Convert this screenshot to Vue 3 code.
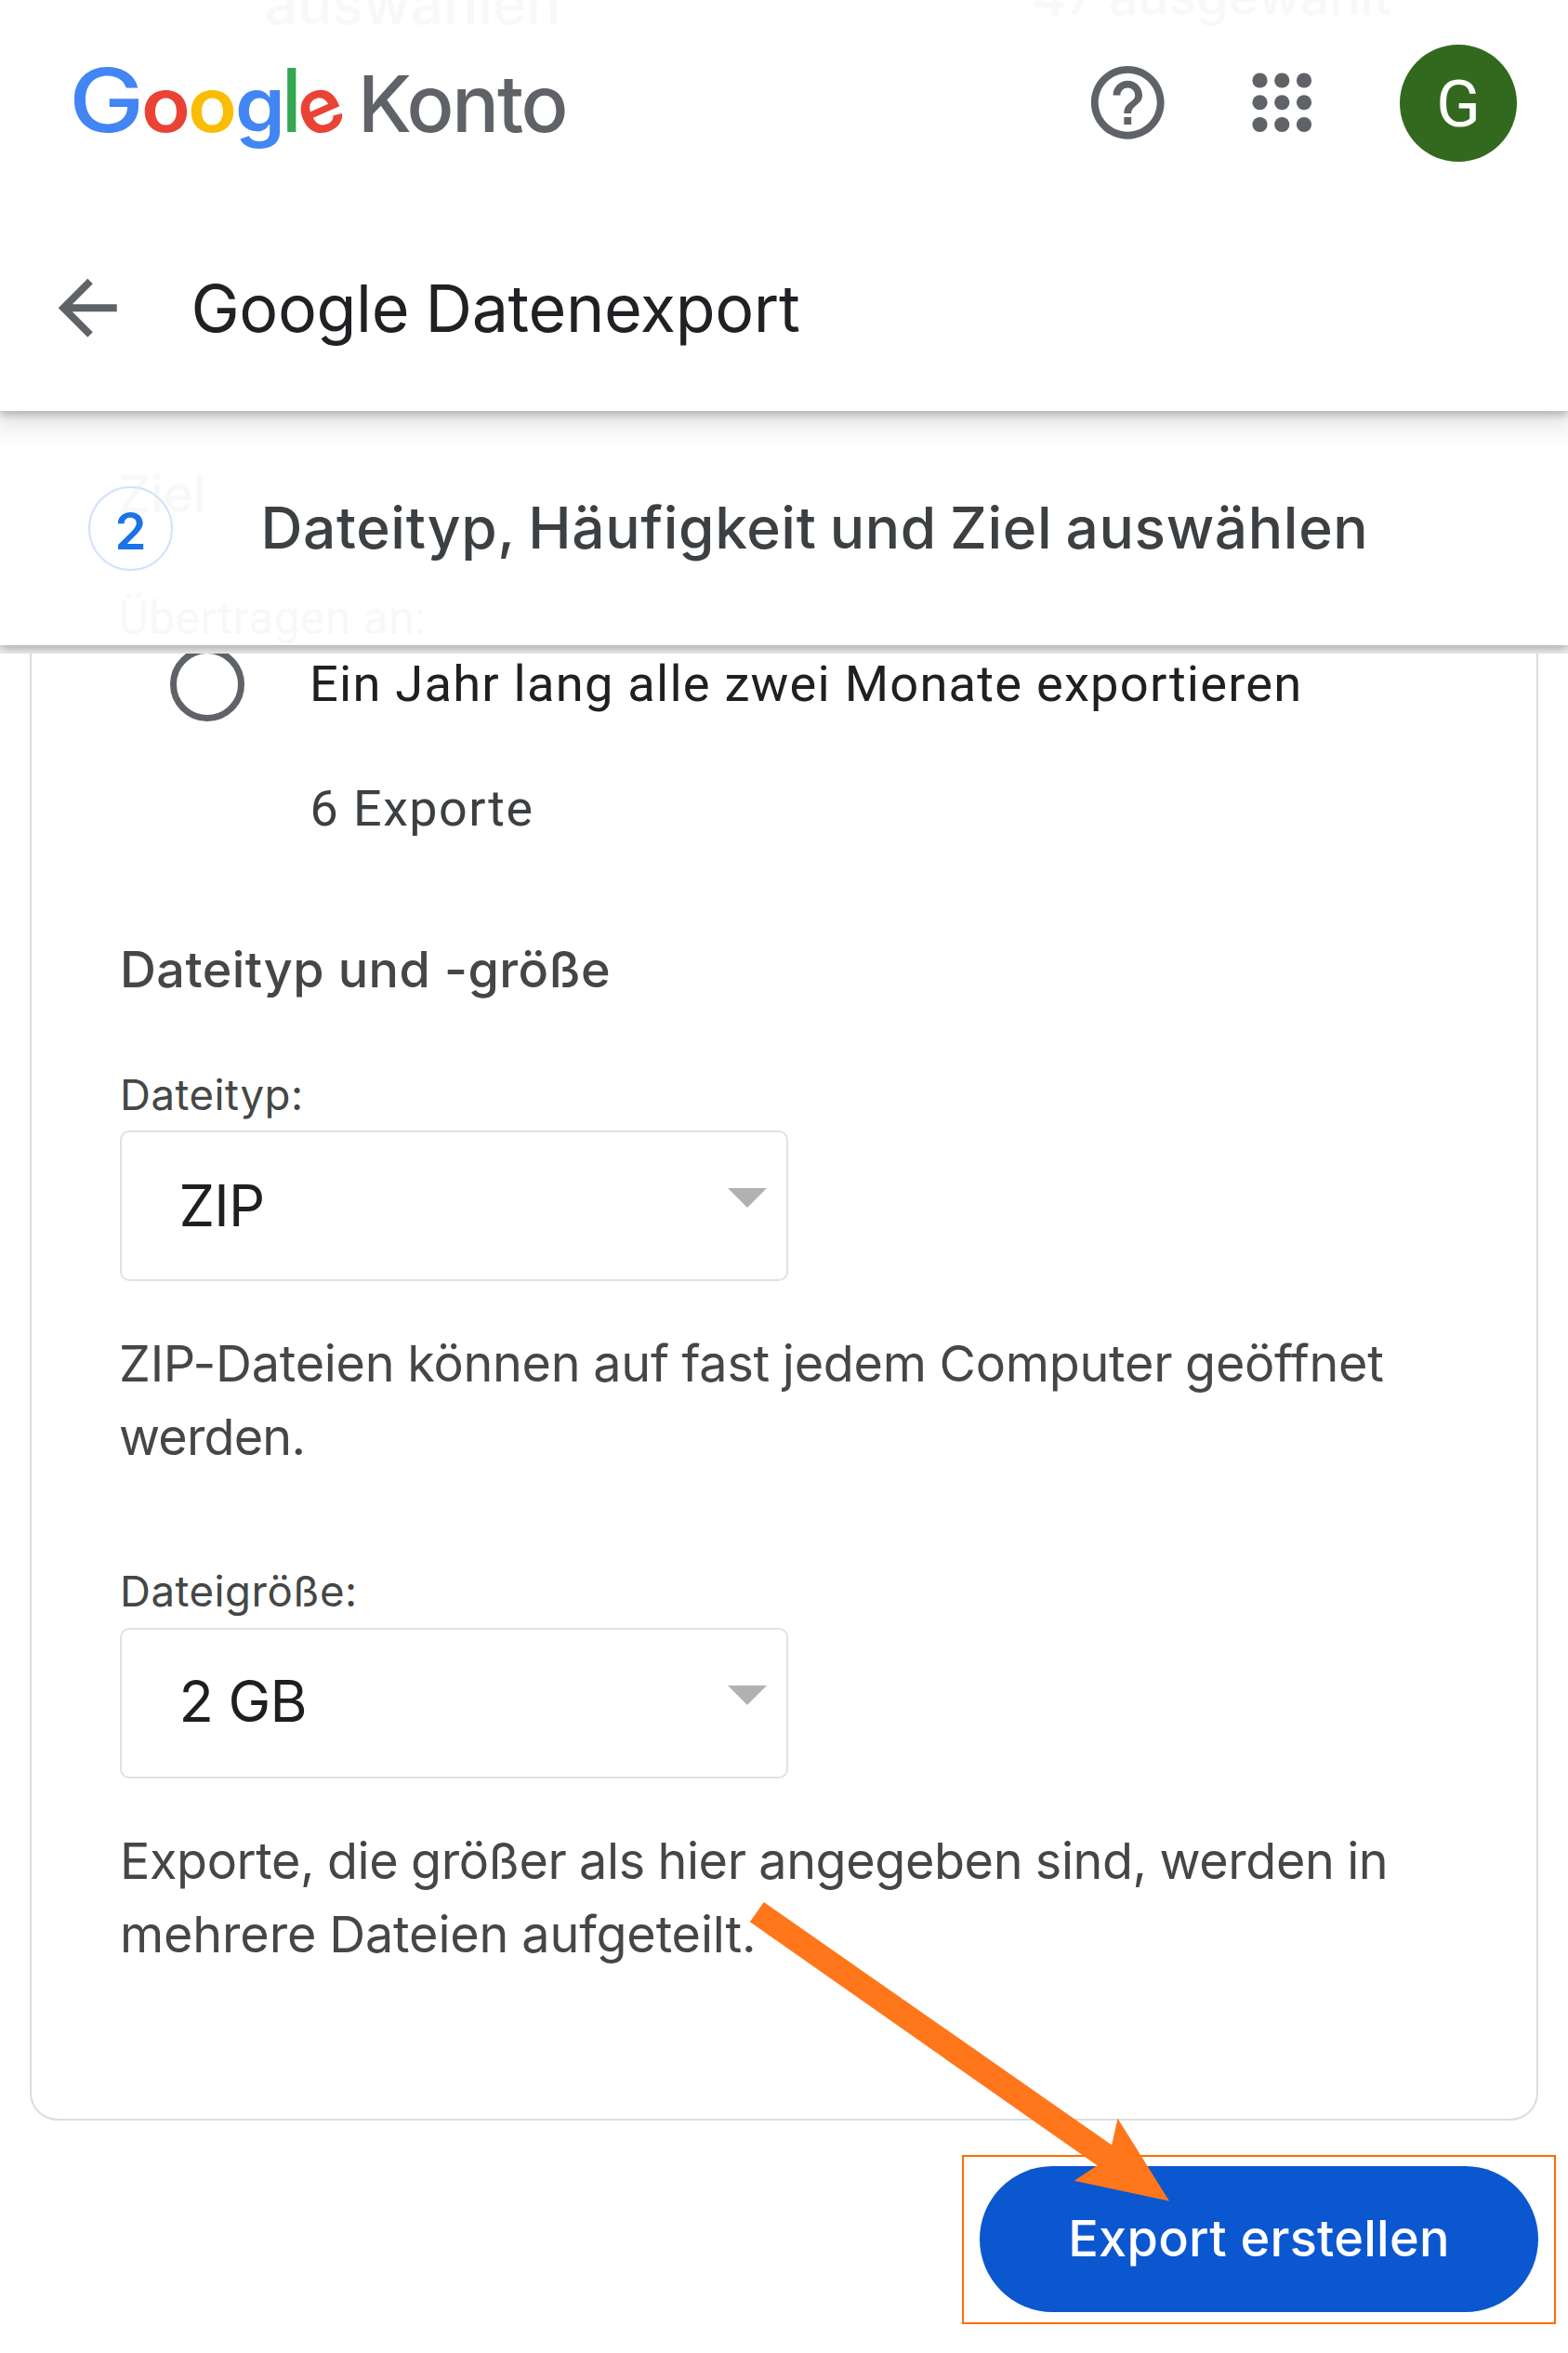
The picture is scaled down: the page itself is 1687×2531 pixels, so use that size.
<script setup>
const logo = [
  { ch: 'G', cls: 'cap blue' },
  { ch: 'o', cls: 'round red' },
  { ch: 'o', cls: 'round yellow' },
  { ch: 'g', cls: 'gee blue' },
  { ch: 'l', cls: 'ell green' },
  { ch: 'e', cls: 'eee red' },
]
const dots = [23.5, 47.25, 71]
</script>

<template>
  <div class="page">
    <header class="header">
      <span class="ghost ghost-left">auswählen</span>
      <span class="ghost ghost-right">47 ausgewählt</span>
      <div class="topbar">
        <div class="brand">
          <span v-for="(l, i) in logo" :key="i" class="letter" :class="l.cls">{{ l.ch }}</span>
          <span class="product">Konto</span>
        </div>
        <svg class="icon help" viewBox="0 0 24 24" aria-hidden="true">
          <path d="M11 18h2v-2h-2v2zm1-16C6.48 2 2 6.48 2 12s4.48 10 10 10 10-4.48 10-10S17.52 2 12 2zm0 18c-4.41 0-8-3.59-8-8s3.59-8 8-8 8 3.59 8 8-3.59 8-8 8zm0-14c-2.21 0-4 1.79-4 4h2c0-1.1.9-2 2-2s2 .9 2 2c0 2-3 1.75-3 5h2c0-2.25 3-2.5 3-5 0-2.21-1.79-4-4-4z" />
        </svg>
        <svg class="icon apps" viewBox="0 0 94.5 94.5" aria-hidden="true">
          <template v-for="y in dots" :key="y">
            <circle v-for="x in dots" :key="x" :cx="x" :cy="y" r="8.1" />
          </template>
        </svg>
        <div class="avatar">G</div>
      </div>
      <div class="titlebar">
        <svg class="icon" viewBox="0 0 24 24" aria-hidden="true">
          <path d="M20 11H7.83l5.59-5.59L12 4l-8 8 8 8 1.41-1.41L7.83 13H20v-2z" />
        </svg>
        <h1>Google Datenexport</h1>
      </div>
    </header>

    <div class="step-wrap">
      <div class="step">
        <span class="ghost ghost-ziel">Ziel</span>
        <span class="ghost ghost-an">Übertragen an:</span>
        <span class="num"><span>2</span></span>
        <h2>Dateityp, Häufigkeit und Ziel auswählen</h2>
      </div>
    </div>

    <main class="card">
      <div class="option">
        <span class="radio"></span>
        <span class="option-label">Ein Jahr lang alle zwei Monate exportieren</span>
      </div>
      <p class="option-note">6 Exporte</p>

      <h3>Dateityp und -größe</h3>

      <div class="label">Dateityp:</div>
      <div class="select">
        <span>ZIP</span>
        <svg class="caret" viewBox="0 0 42 21"><path d="M0 0h42L21 21z" /></svg>
      </div>
      <p class="help-text first">ZIP-Dateien können auf fast jedem Computer geöffnet<br /><span class="tight">werden.</span></p>

      <div class="label second">Dateigröße:</div>
      <div class="select size">
        <span>2 GB</span>
        <svg class="caret" viewBox="0 0 42 21"><path d="M0 0h42L21 21z" /></svg>
      </div>
      <p class="help-text last">Exporte, die größer als hier angegeben sind, werden in<br /><span class="loose">mehrere Dateien aufgeteilt.</span></p>
    </main>

    <div class="highlight">
      <button class="create" type="button">Export erstellen</button>
    </div>

    <svg class="pointer" viewBox="0 0 452 322" aria-hidden="true">
      <path d="M15.8 0 390.1 261.3 396.5 232.7 452 321.5 349.7 299.7 374.5 283.3 .8 21.3z" />
    </svg>
  </div>
</template>

<style>
body { margin: 0; background: #fff; }
</style>

<style scoped>
.page {
  position: relative;
  display: flex;
  flex-direction: column;
  width: 1687px;
  height: 2531px;
  overflow: hidden;
  background: #fff;
  font-family: Inter, "Liberation Sans", sans-serif;
  color: #444746;
}
h1, h2, h3, p { margin: 0; }
.ghost { position: absolute; color: #f8f8f8; white-space: nowrap; line-height: 80px; }
.ghost-left { left: 285px; top: -36.5px; font-size: 62px; font-weight: 500; letter-spacing: -.1px; }
.ghost-right { left: 1110px; top: -44.5px; font-size: 56px; font-weight: 450; letter-spacing: -.4px; }
.ghost-ziel { left: 127px; top: 48.5px; font-size: 54.5px; font-weight: 500; }
.ghost-an { left: 127.5px; top: 183px; font-family: Roboto, sans-serif; font-size: 49.7px; letter-spacing: .5px; }

.header {
  position: relative;
  z-index: 2;
  flex: none;
  height: 442px;
  background: #fff;
  box-shadow: 0 4px 8px rgba(60, 64, 67, .3), 0 8px 24px 8px rgba(60, 64, 67, .15);
}
.topbar {
  position: relative;
  display: flex;
  align-items: center;
  height: 221px;
  padding: 0 55px 0 73.5px;
}
.brand { flex: 1; white-space: nowrap; font-size: 0; }
.letter {
  display: inline-block;
  line-height: 100px;
  font-size: 82px;
  font-weight: 600;
  transform-origin: 0 50%;
}
.cap { width: 78px; font-size: 94.5px; font-weight: 550; transform: scaleX(1.15); }
.round { width: 50.6px; transform: scaleX(1.06); }
.gee { width: 50.6px; transform: scaleX(1.05); }
.ell { width: 19.5px; font-size: 95px; font-weight: 500; transform: scaleX(.9); }
.eee { width: 62.3px; transform-origin: 24px 62%; transform: rotate(-24deg); }
.blue { color: #4285f4; }
.red { color: #ea4335; }
.yellow { color: #fbbc04; }
.green { color: #34a853; }
.product { line-height: 100px; font-size: 84.4px; font-weight: 460; letter-spacing: -2.2px; color: #5f6368; }
.icon { flex: none; width: 94.5px; height: 94.5px; fill: #5f6368; }
.help { margin-right: 71px; }
.apps { margin-right: 80px; }
.avatar {
  flex: none;
  width: 126px;
  height: 126px;
  border-radius: 50%;
  background: #33691e;
  color: #fff;
  font: 450 70px/129px Roboto, sans-serif;
  text-align: center;
}
.titlebar { position: relative; display: flex; align-items: center; height: 221px; padding-left: 47.4px; }
h1 { margin-left: 63.5px; font-size: 70px; line-height: 88px; font-weight: 400; letter-spacing: -.35px; word-spacing: -2px; color: #202124; }

.step-wrap { position: relative; z-index: 1; flex: none; height: 261px; overflow: hidden; background: #fff; }
.step {
  position: relative;
  display: flex;
  align-items: center;
  height: 252px;
  padding-left: 95px;
  background: #fff;
  box-shadow: 0 4px 8px rgba(60, 64, 67, .3), 0 8px 24px 8px rgba(60, 64, 67, .15);
}
.num {
  position: relative;
  box-sizing: border-box;
  width: 91px;
  height: 91px;
  padding-top: 4px;
  border: 2px solid #d2e3fc;
  border-radius: 50%;
  color: #1a73e8;
  font-size: 54.5px;
  font-weight: 600;
  line-height: 85px;
  text-align: center;
}
h2 { position: relative; margin-left: 94.5px; font-size: 62.2px; line-height: 80px; font-weight: 540; letter-spacing: .64px; word-spacing: -3px; color: #3c4043; white-space: nowrap; }

.card {
  flex: none;
  box-sizing: border-box;
  width: 1623px;
  height: 1586.5px;
  margin: -9px 0 0 32px;
  padding: 2px 0 0 95px;
  border: solid #dadce0;
  border-width: 0 2px 2.5px;
  border-radius: 0 0 30px 30px;
}
.option { display: flex; align-items: center; height: 80px; padding-left: 54px; }
.radio { box-sizing: border-box; width: 80px; height: 80px; border: 7px solid #5f6368; border-radius: 50%; }
.option-label { margin-left: 70px; font: 400 54.3px/80px Roboto, sans-serif; letter-spacing: 1.2px; color: #202020; white-space: nowrap; }
.option-note { margin: 53.6px 0 0 204.5px; font: 400 53.8px/80px Roboto, sans-serif; letter-spacing: 1.5px; color: #3c4043; }
h3 { margin-top: 93.6px; font-size: 53.9px; line-height: 80px; font-weight: 540; letter-spacing: .45px; }
.label { margin-top: 65px; font-size: 45.6px; line-height: 60px; font-weight: 420; letter-spacing: .5px; }
.label.second { margin-top: 96.4px; }
.select {
  box-sizing: border-box;
  display: flex;
  align-items: center;
  justify-content: space-between;
  width: 719px;
  height: 162px;
  margin-top: 7.8px;
  padding: 0 21.5px 0 61.5px;
  border: 2px solid #e1e1e1;
  border-radius: 10px;
  color: #1f1f1f;
  font-size: 61.3px;
  font-weight: 420;
  line-height: 80px;
  letter-spacing: -.8px;
}
.size { margin-top: 8.5px; }
.size > span { padding-bottom: 3px; }
.caret { width: 42px; height: 21px; margin-bottom: 17px; fill: #b1b1b1; }
.help-text { margin-top: 50.2px; font-size: 53.9px; font-weight: 420; line-height: 78.8px; white-space: nowrap; word-spacing: -1px; }
.first { margin-left: -1px; letter-spacing: -.25px; }
.last { letter-spacing: -.39px; }
.tight { letter-spacing: -.8px; }
.loose { letter-spacing: -.13px; }

.highlight {
  box-sizing: border-box;
  flex: none;
  align-self: flex-end;
  width: 639px;
  height: 182px;
  margin: 37px 13px 0 0;
  padding: 10.5px 17px;
  border: 2px solid #ff6d01;
}
.create {
  display: block;
  width: 601px;
  height: 157px;
  padding: 0 0 2px;
  border: 0;
  border-radius: 79px;
  background: #0b57d0;
  color: #fff;
  font: 540 54.1px/80px Inter, sans-serif;
  letter-spacing: .25px;
}
.pointer { position: absolute; left: 806px; top: 2046px; width: 452px; height: 322px; fill: #ff761b; z-index: 3; }
</style>
